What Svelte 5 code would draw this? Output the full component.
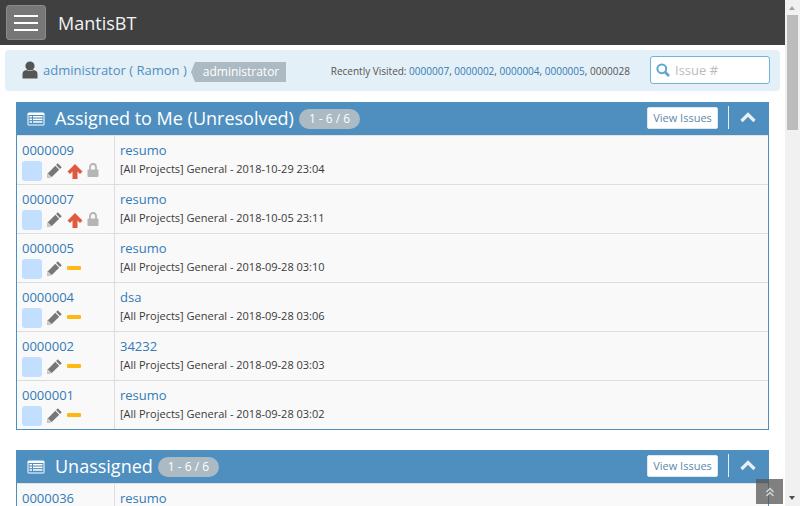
<script>
  const assigned = [
    { id: "0000009", summary: "resumo", date: "2018-10-29 23:04", high: true, locked: true },
    { id: "0000007", summary: "resumo", date: "2018-10-05 23:11", high: true, locked: true },
    { id: "0000005", summary: "resumo", date: "2018-09-28 03:10" },
    { id: "0000004", summary: "dsa", date: "2018-09-28 03:06" },
    { id: "0000002", summary: "34232", date: "2018-09-28 03:03" },
    { id: "0000001", summary: "resumo", date: "2018-09-28 03:02" },
  ];
  const unassigned = [{ id: "0000036", summary: "resumo", date: "" }];
  const recent = ["0000007", "0000002", "0000004", "0000005"];
</script>

{#snippet listIcon()}
  <svg class="list-icon" viewBox="0 0 18 14" width="18" height="14">
    <rect x="0.5" y="0.5" width="17" height="13" rx="1.5" fill="#fff" />
    <rect x="1.5" y="3" width="15" height="9.5" fill="#4f8fc0" />
    <g fill="#fff">
      <rect x="2.5" y="4" width="2.5" height="1.5" />
      <rect x="6" y="4" width="9.5" height="1.5" />
      <rect x="2.5" y="6.6" width="2.5" height="1.5" />
      <rect x="6" y="6.6" width="9.5" height="1.5" />
      <rect x="2.5" y="9.2" width="2.5" height="1.5" />
      <rect x="6" y="9.2" width="9.5" height="1.5" />
    </g>
  </svg>
{/snippet}

{#snippet widget(title, rows)}
  <section class="widget">
    <header class="widget-head">
      {@render listIcon()}
      <h4>{title}</h4>
      <span class="count">1 - 6 / 6</span>
      <span class="head-actions">
        <button class="view">View Issues</button>
        <span class="divider"></span>
        <svg class="chevron" viewBox="0 0 16 11" width="16" height="11">
          <path d="M1.5 9 L8 2.5 L14.5 9" fill="none" stroke="#e8eef3" stroke-width="3.2" />
        </svg>
      </span>
    </header>
    <div class="rows">
      {#each rows as row}
        <div class="row">
          <div class="col-id">
            <a href="#top">{row.id}</a>
            {#if row.date}
              <div class="icons">
                <span class="status"></span>
                <svg class="pencil" viewBox="0 0 15 15" width="15" height="15">
                  <path d="M10.8 0.3 L14.7 4.2 L13 5.9 L9.1 2 Z" fill="#777" />
                  <path d="M8.3 2.8 L12.2 6.7 L4.8 14.1 L0.3 14.7 L0.9 10.2 Z" fill="#777" />
                  <path d="M0.9 10.2 L4.8 14.1 L0.3 14.7 Z" fill="#ccc" />
                </svg>
                {#if row.high}
                  <svg class="arrow" viewBox="0 0 16 15" width="16" height="15">
                    <path d="M8 0 L15.5 7.5 L13 10 L10.5 7.5 V15 H5.5 V7.5 L3 10 L0.5 7.5 Z" fill="#e05a3f" />
                  </svg>
                {:else}
                  <span class="normal"></span>
                {/if}
                {#if row.locked}
                  <svg class="lock" viewBox="0 0 12 14" width="12" height="14">
                    <path d="M3 7 V4 a3 3 0 0 1 6 0 V7" fill="none" stroke="#b5b5b5" stroke-width="1.8" />
                    <rect x="0.5" y="6.5" width="11" height="7.5" rx="1" fill="#b5b5b5" />
                  </svg>
                {/if}
              </div>
            {/if}
          </div>
          <div class="col-summary">
            <a href="#top">{row.summary}</a>
            {#if row.date}
              <div class="meta">[All Projects] General - {row.date}</div>
            {/if}
          </div>
        </div>
      {/each}
    </div>
  </section>
{/snippet}

<div class="page" id="top">
  <nav class="navbar">
    <button class="burger" aria-label="menu"><span></span><span></span><span></span></button>
    <span class="brand">MantisBT</span>
  </nav>

  <div class="breadcrumbs">
    <svg class="user" viewBox="0 0 16 18" width="16" height="18">
      <circle cx="8" cy="5" r="4.6" fill="#555" />
      <path d="M0.5 17.5 V13 Q0.5 9.6 4.5 9 Q8 11 11.5 9 Q15.5 9.6 15.5 13 V17.5 Z" fill="#555" />
    </svg>
    <a class="user-link" href="#top">administrator ( Ramon )</a>
    <span class="role">administrator</span>
    <span class="recent">
      Recently Visited:
      {#each recent as id}<a href="#top">{id}</a>,&nbsp;{/each}0000028
    </span>
    <label class="search">
      <svg viewBox="0 0 14 14" width="14" height="14">
        <circle cx="5.8" cy="5.8" r="4.4" fill="none" stroke="#5ba6d6" stroke-width="2" />
        <path d="M9 9 L13 13" stroke="#5ba6d6" stroke-width="2.6" />
      </svg>
      <input placeholder="Issue #" />
    </label>
  </div>

  <main class="content">
    {@render widget("Assigned to Me (Unresolved)", assigned)}
    {@render widget("Unassigned", unassigned)}
  </main>

  <div class="to-top">
    <svg viewBox="0 0 10 10" width="10" height="10">
      <path d="M1.5 5 L5 1.5 L8.5 5 M1.5 9 L5 5.5 L8.5 9" fill="none" stroke="#d8d8d8" stroke-width="1.4" />
    </svg>
  </div>

  <div class="scrollbar">
    <span class="up"></span>
    <span class="thumb"></span>
    <span class="down"></span>
  </div>
</div>

<style>
  :global(body) {
    margin: 0;
    overflow: hidden;
    background: #fff;
  }

  .page {
    position: relative;
    width: 800px;
    height: 506px;
    overflow: hidden;
    padding-right: 15px;
    box-sizing: border-box;
    font-family: "Open Sans", sans-serif;
    font-size: 13px;
    color: #393939;
    background: #fff;
  }

  a {
    color: #337ab7;
    text-decoration: none;
  }

  .navbar {
    display: flex;
    align-items: center;
    height: 45px;
    background: #404040;
    padding-left: 6px;
  }

  .burger {
    display: flex;
    flex-direction: column;
    justify-content: center;
    gap: 5px;
    width: 40px;
    height: 35px;
    padding: 0 7px;
    box-sizing: border-box;
    background: #777;
    border: 1px solid #8a8a8a;
    border-radius: 3px;
  }

  .burger span {
    display: block;
    height: 2px;
    background: #fff;
  }

  .brand {
    margin-left: 12px;
    color: #f2f2f2;
    font-size: 18px;
  }

  .breadcrumbs {
    display: flex;
    align-items: center;
    height: 41px;
    margin: 5px 5px 0;
    padding: 0 10px 0 17px;
    background: #e4f0f7;
    border-radius: 4px;
  }

  .user {
    margin: 0 5px 2px 0;
  }

  .user-link {
    color: #4f8fc0;
    padding-bottom: 2px;
  }

  .role {
    position: relative;
    display: block;
    height: 20px;
    line-height: 20px;
    margin: 2px 0 0 8px;
    padding: 0 7px 0 8px;
    font-size: 12px;
    color: #fff;
    background: #abbac3;
  }

  .role::before {
    content: "";
    position: absolute;
    left: -4px;
    top: 0;
    border-top: 10px solid transparent;
    border-bottom: 10px solid transparent;
    border-right: 4px solid #abbac3;
  }

  .recent {
    margin-left: auto;
    font-size: 10px;
    color: #555;
    white-space: nowrap;
  }

  .recent a {
    color: #337ab7;
  }

  .search {
    display: flex;
    align-items: center;
    gap: 5px;
    width: 120px;
    height: 28px;
    margin: 0 0 1px 20px;
    padding-left: 5px;
    box-sizing: border-box;
    background: #fff;
    border: 1px solid #6fb3e0;
    border-radius: 3px;
  }

  .search input {
    width: 85px;
    padding: 0;
    border: 0;
    outline: 0;
    font: inherit;
    background: transparent;
  }

  .search input::placeholder {
    color: #bbb;
    opacity: 1;
  }

  .content {
    padding: 11px 16px 0;
    display: flex;
    flex-direction: column;
    gap: 20px;
  }

  .widget {
    border: 1px solid #4f8fc0;
    border-top: 0;
  }

  .widget-head {
    display: flex;
    align-items: center;
    height: 33px;
    margin: 0 -1px;
    padding: 0 10px;
    background: #4f8fc0;
    color: #fff;
  }

  .list-icon {
    flex: none;
    margin-left: 1px;
  }

  h4 {
    margin: 0 0 0 10px;
    font-size: 18px;
    font-weight: 400;
    line-height: 33px;
  }

  .count {
    margin-left: 5px;
    padding: 0 10px;
    height: 20px;
    line-height: 20px;
    border-radius: 10px;
    font-size: 12px;
    background: #abbac3;
  }

  .head-actions {
    display: flex;
    align-items: center;
    margin: 0 0 2px auto;
  }

  .view {
    width: 71px;
    height: 22px;
    padding: 0;
    font: 11px "Open Sans", sans-serif;
    color: #5d87ab;
    background: #fff;
    border: 1px solid #dfe8f0;
    border-radius: 2px;
  }

  .divider {
    width: 1px;
    height: 23px;
    margin: 0 11px 0 10px;
    background: #e8eef3;
  }

  .chevron {
    margin-right: 3px;
  }

  .row {
    display: flex;
    height: 48px;
    background: #f9f9f9;
    border-top: 1px solid #ddd;
  }

  .row:first-child {
    border-top-color: #e4e4e4;
  }

  .col-id {
    width: 92px;
    padding: 5px 0 0 5px;
    border-right: 1px solid #ddd;
  }

  .col-summary {
    padding: 5px 0 0 5px;
  }

  .icons {
    display: flex;
    align-items: center;
    height: 22px;
    margin-top: 1px;
  }

  .status {
    width: 20px;
    height: 20px;
    background: #c2dfff;
    border-radius: 3px;
    margin-right: 5px;
  }

  .pencil {
    margin: 0 5px 2px 0;
  }

  .arrow {
    margin-right: 4px;
  }

  .normal {
    width: 14px;
    height: 4px;
    margin-bottom: 2px;
    background: #fdb913;
    border-radius: 1px;
  }

  .lock {
    margin-bottom: 2px;
  }

  .meta {
    font-size: 11px;
    line-height: 16px;
    margin-top: 2px;
  }

  .to-top {
    position: absolute;
    left: 756px;
    top: 479px;
    display: flex;
    align-items: center;
    justify-content: center;
    width: 27px;
    height: 25px;
    background: rgba(85, 85, 85, 0.75);
  }

  .scrollbar {
    position: absolute;
    right: 0;
    top: 0;
    width: 15px;
    height: 506px;
    background: #f1f1f1;
  }

  .thumb {
    position: absolute;
    left: 2px;
    top: 15px;
    width: 11px;
    height: 115px;
    background: #bcbcbc;
  }

  .up,
  .down {
    position: absolute;
    left: 4px;
    border-left: 3.5px solid transparent;
    border-right: 3.5px solid transparent;
  }

  .up {
    top: 6px;
    border-bottom: 4px solid #a3a3a3;
  }

  .down {
    bottom: 6px;
    border-top: 4px solid #505050;
  }
</style>
